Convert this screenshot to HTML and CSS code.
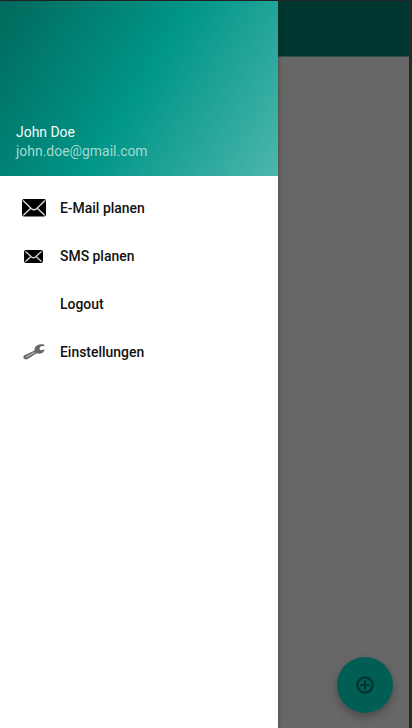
FILE: index.html
```html
<!DOCTYPE html>
<html lang="de">
<head>
<meta charset="utf-8">
<title>Navigation</title>
<link rel="stylesheet" href="styles.css">
</head>
<body>
<div class="screen">
  <aside class="drawer">
    <header class="profile">
      <div class="name">John Doe</div>
      <div class="email">john.doe@gmail.com</div>
    </header>
    <nav class="menu">
      <a class="item"><span class="icon"><svg width="24" height="18" viewBox="0 0 24 18"><rect width="24" height="17.5" rx="2"/><path d="M1 1.5l8.5 8.2q2.5 2 5 0L23 1.5M1.3 16.2l7.5-7M22.7 16.2l-7.5-7" fill="none" stroke="#ddd" stroke-width="1.4"/></svg></span><span class="label">E-Mail planen</span></a>
      <a class="item"><span class="icon sms"><svg width="19" height="13" viewBox="0 0 19 13"><rect width="19" height="13" rx="2"/><path d="M1.5 1.5l6 5.4q2 1.6 4 0l6-5.4M1.5 11.5l5.5-5M17.5 11.5l-5.5-5" fill="none" stroke="#d5d5d5" stroke-width="1.3"/></svg></span><span class="label">SMS planen</span></a>
      <a class="item"><span class="icon"></span><span class="label">Logout</span></a>
      <a class="item"><span class="icon"><svg width="24" height="18" viewBox="0 0 24 18"><path d="M12.5 7.5C12 3.5 16 .5 22 1.5L22.6 3 19 3.3 17.3 5.5 18.4 7.3 22.7 6.5C21.5 10.5 18 11.5 14.8 10.3L5.6 16C3 17.5.3 15 1.8 12.8 2.2 12.2 3 11.9 4 11.5Z" fill="#686868"/><path d="M4.5 13.9l7.8-4.3" fill="none" stroke="#aaa" stroke-width="1.3" stroke-linecap="round"/></svg></span><span class="label">Einstellungen</span></a>
    </nav>
  </aside>
  <main class="content">
    <div class="toolbar"></div>
    <button class="fab" aria-label="Hinzufügen"><svg width="18" height="18" viewBox="0 0 18 18" fill="none" stroke="#00342e" stroke-width="2.2"><circle cx="9" cy="9" r="7.6"/><path d="M9 4.3v9.4M4.3 9h9.4"/></svg></button>
  </main>
</div>
</body>
</html>
```
FILE: styles.css
```css
* { box-sizing: border-box; }
body {
  margin: 0;
  background: #262729;
  font-family: Roboto, sans-serif;
}
.screen {
  display: flex;
  width: 409px;
  height: 728px;
  padding-top: 1px;
}
.drawer {
  width: 278px;
  background: #fff;
  box-shadow: 0 0 5px rgba(0, 0, 0, .35);
  z-index: 1;
}
.profile {
  height: 175px;
  padding: 122px 16px 0;
  background: linear-gradient(122.3deg, #00695c, #009688 50%, #4db6ac);
  font-size: 13.95px;
  line-height: 19px;
}
.name { color: #f4fbfa; }
.email { color: #a5d9d2; }
.menu { padding-top: 8px; }
.item {
  display: flex;
  align-items: center;
  height: 48px;
  padding-left: 22px;
}
.icon {
  display: flex;
  justify-content: center;
  width: 24px;
  margin-right: 14px;
}
.icon svg { display: block; }
.sms { padding-right: 1px; }
.label {
  color: #111;
  font-size: 13.95px;
  font-weight: 500;
}
.content {
  display: flex;
  flex: 1;
  flex-direction: column;
  justify-content: space-between;
  background: #676767;
}
.toolbar {
  height: 56px;
  background: #003630;
  border-bottom: 1px solid #33504d;
}
.fab {
  display: flex;
  align-items: center;
  justify-content: center;
  align-self: flex-end;
  width: 56px;
  height: 56px;
  margin: 0 16px 15px 0;
  padding: 0;
  border: 0;
  border-radius: 50%;
  background: #005e54;
  box-shadow: 0 4px 8px rgba(0, 0, 0, .28);
}
```
